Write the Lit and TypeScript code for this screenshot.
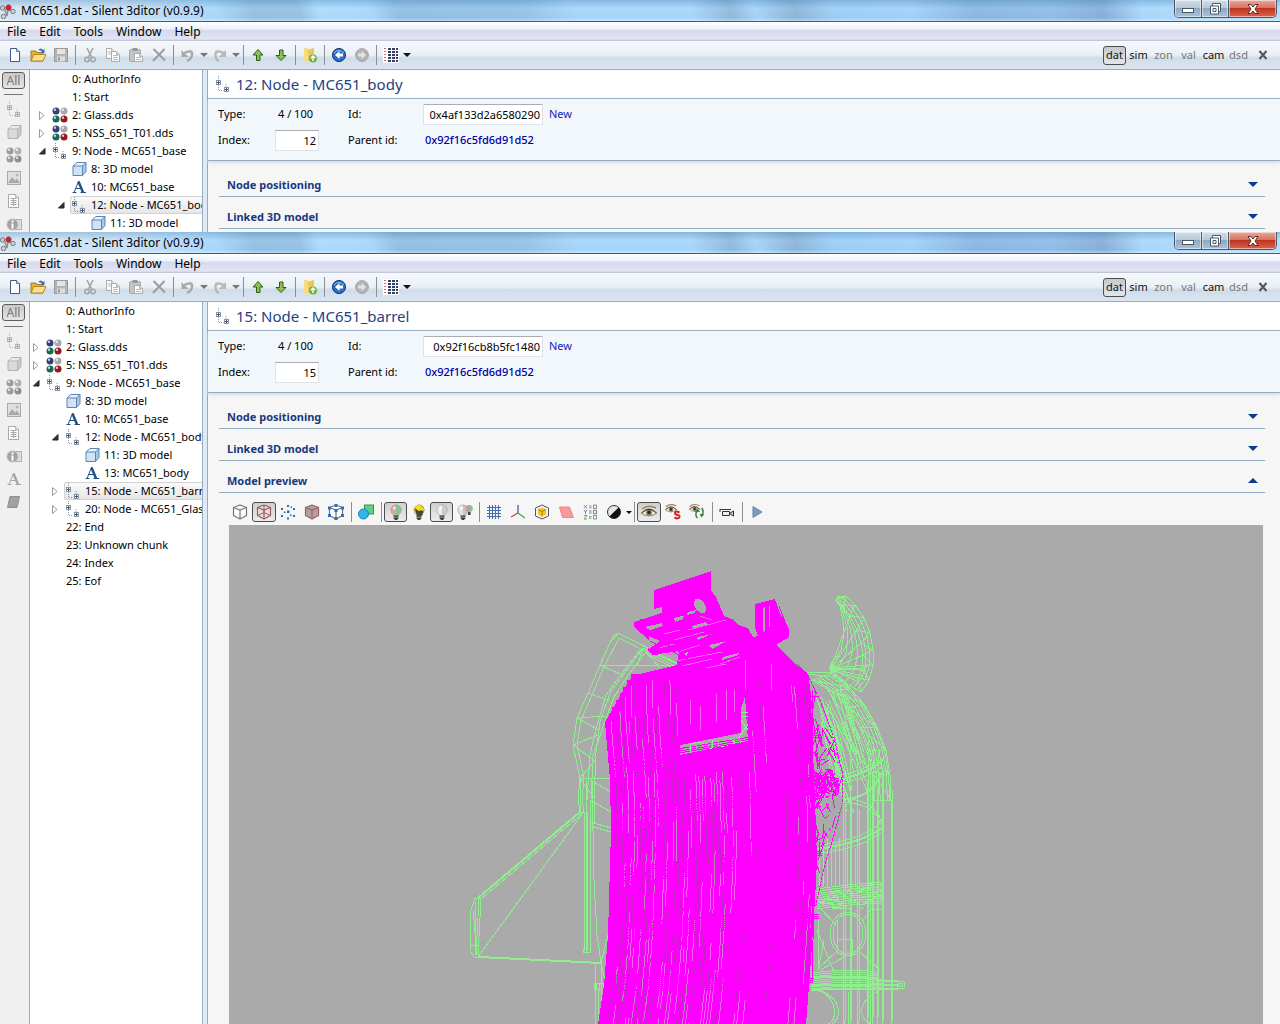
import { LitElement, html, css, svg, nothing } from "lit";
import { customElement, property } from "lit/decorators.js";
import { classMap } from "lit/directives/class-map.js";

/* ---------- icons, drawn on a 16 x 16 grid ---------- */

const cube = (line: string, top: string, front: string, side: string) => svg`
  <path d="M2 5 6 1.5h9L11.5 5z" fill=${top}/><path d="M11.500 5 15 1.500v9L11.500 14.500z" fill=${side}/>
  <rect x="2" y="5" width="9.500" height="9.500" fill=${front}/>
  <path d="M2 5v9.500h9.500L15 10.500v-9H6zM2 5h9.500v9.500M11.500 5 15 1.500" fill="none" stroke=${line} stroke-width="1" stroke-linejoin="round"/>`;

const hexCube = (line: string, fill: string) => svg`
  <path d="M8 1 14.500 3.500v8L8 15 1.500 11.500v-8z" fill=${fill} stroke=${line} stroke-width="1.200" stroke-linejoin="round"/>
  <path d="M1.500 3.500 8 6l6.500-2.500M8 6v9" fill="none" stroke=${line} stroke-width="1.200"/>`;

const node = (c: string, box: string, mark: string) => svg`
  <path d="M3.500 0v4M3.500 9v5.500h5M11 8v3" stroke=${c} stroke-dasharray="1 1" fill="none"/>
  <rect x="1.500" y="4.500" width="4" height="4" fill=${box} stroke=${c}/><path d="M3.500 5v3M2 6.500h3" stroke=${mark} stroke-width=".8"/>
  <rect x="9.500" y="11.500" width="4" height="4" fill=${box} stroke=${c}/><path d="M11.500 12v3M10 13.500h3" stroke=${mark} stroke-width=".8"/>`;

const ball = (x: number, y: number, c: string, r = 3.5) => svg`
  <circle cx=${x} cy=${y} r=${r} fill=${c}/><circle cx=${x - 1} cy=${y - 1.3} r="1.200" fill="#fff" opacity=".75"/>`;

const bulb = (l: string, r: string) => svg`
  <path d="M8 .800A5.200 5.200 0 0 0 4 9.300q1.400 1.200 1.600 2.700H8z" fill=${l}/>
  <path d="M8 .800A5.200 5.200 0 0 1 12 9.300q-1.400 1.200-1.600 2.700H8z" fill=${r}/>
  <path d="M8 .800A5.200 5.200 0 0 0 4 9.300q1.400 1.200 1.600 2.700h4.800Q10.600 10.500 12 9.300A5.200 5.200 0 0 0 8 .800z" fill="none" stroke="#999" stroke-width=".6"/>
  <path d="M5.700 11.500h4.600v2.700L9 16H7l-1.300-1.800z" fill="#3c3c3c"/><path d="M6 13.200h4" stroke="#c4c4c4" stroke-width=".7"/>
  <circle cx="6.500" cy="4" r="1.500" fill="#fff" opacity=".7"/>`;

const eye = svg`
  <path d="M1 5Q7 0 15 4" stroke="#a4835f" stroke-width="1.600" fill="none"/>
  <path d="M0 9Q8 1 16 9 8 15 0 9z" fill="#e8cdb4" stroke="#8d6f52" stroke-width=".8"/>
  <path d="M2 9q6-6 12 0-6 4-12 0z" fill="#f3f3ea"/><circle cx="8" cy="8.500" r="3" fill="#6d7f5c"/>
  <circle cx="8" cy="8.500" r="1.400" fill="#1c2418"/><path d="M1.500 8.500Q8 2 14.500 8.500" stroke="#3d2c1c" fill="none"/>`;

const page = (x: number, y: number, w: number, h: number, line: string) => svg`
  <path d="M${x} ${y}h${w - 3}l3 3v${h - 3}h-${w}z" fill="#fdfdfd" stroke=${line}/>
  <path d="M${x + w - 3} ${y}v3h3" fill="#dde" stroke=${line} stroke-width=".8"/>`;

const glyphA = (c: string) => svg`
  <path d="M3 13.500 7.500 2.500 12.500 13.500" fill="none" stroke=${c} stroke-width="1"/>
  <path d="M7.500 2.500 12 13.500" stroke=${c} stroke-width="2.400"/><path d="M5 9.500h5M1.500 13.500h4M9.500 13.500h5.500" stroke=${c} stroke-width="1.200"/>`;

const icons: Record<string, unknown> = {
  logo: svg`<path d="M4 4 7 13M7 13l1-6M8 7l5 1" stroke="#8a8f94" stroke-width="1.500"/>
    <circle cx="2.500" cy="5" r="2.200" fill="#cfd3d6" stroke="#777"/><circle cx="3.500" cy="13.500" r="2.200" fill="#cfd3d6" stroke="#777"/>
    <circle cx="13" cy="8.500" r="2.200" fill="#cfd3d6" stroke="#777"/><circle cx="8.500" cy="4.500" r="2.600" fill="#d81e2c" stroke="#a33"/>`,
  new: page(3.5, 1.5, 9, 13, "#3c5a80"),
  open: svg`<path d="M1 4h5l1 1.500h6V14H1z" fill="#e2b23c" stroke="#a67a18"/><path d="M4 7.500h12L13 14H1z" fill="#fbe08a" stroke="#b8892a"/><path d="M8 3q3-3 5 0l1.500-1v4h-4L12 4.500Q10.500 3 8 3z" fill="#3e6fa8"/>`,
  save: svg`<path d="M1.500 1.500h13v13h-13z" fill="#b4b4b4" stroke="#999"/><rect x="4" y="2" width="8" height="5" fill="#e6e6e6"/><rect x="4" y="9.500" width="8" height="5" fill="#ddd"/><rect x="5" y="10.500" width="2" height="3" fill="#999"/>`,
  cut: svg`<path d="M5 1 9.500 10M11 1 6.500 10" stroke="#a4a4a4" stroke-width="1.600"/><circle cx="5" cy="12.500" r="2.200" fill="none" stroke="#a4a4a4" stroke-width="1.500"/><circle cx="11" cy="12.500" r="2.200" fill="none" stroke="#a4a4a4" stroke-width="1.500"/>`,
  copy: svg`${page(1.5, 1.5, 8, 10, "#aaa")}<path d="M3 5h4M3 7h4" stroke="#bbb"/>${page(6.5, 4.500, 8, 10, "#aaa")}<path d="M8 8.500h5M8 10.500h5M8 12.500h5" stroke="#bbb"/>`,
  paste: svg`<rect x="1.500" y="2.500" width="11" height="12" rx="1" fill="#c4c4c4" stroke="#a6a6a6"/><rect x="4.500" y="1" width="5" height="3" fill="#999"/>${page(6.5, 6.5, 8, 8, "#aaa")}<path d="M8 10.500h5M8 12.500h5" stroke="#bbb"/>`,
  del: svg`<path d="M2.500 2 14 13.500M13.500 2 2 14" stroke="#9c9c9c" stroke-width="2"/>`,
  undo: svg`<path d="M4 6q9-4 8 2Q11.500 12 7 14" fill="none" stroke="#a8a8a8" stroke-width="2.400"/><path d="M1.500 3v7h7z" fill="#a8a8a8"/>`,
  redo: svg`<path d="M12 6Q3 2 3.500 8 4 13 7 14" fill="none" stroke="#b8b8b8" stroke-width="2.400"/><path d="M14 3v7H7z" fill="#b8b8b8"/>`,
  up: svg`<path d="M8 2.500 13 8h-3v5.500H6.500V8H3z" fill="#8cc152" stroke="#2f5c16" stroke-linejoin="round"/>`,
  down: svg`<path d="M8 13.500 13 8.500h-3V3H6.500v5.500H3z" fill="#8cc152" stroke="#2f5c16" stroke-linejoin="round"/>`,
  folder: svg`<path d="M2 1h4v14H2z" fill="#f7dc87"/><path d="M6 2.500 12 1v11l-6 2z" fill="#eec65a"/><circle cx="11" cy="11.500" r="4" fill="#6db33f"/><path d="M11 9v5M8.800 11.300 11 9l2.200 2.300" stroke="#fff" stroke-width="1.400" fill="none"/>`,
  back: svg`<circle cx="8" cy="8" r="6.600" fill="#2a6cc4" stroke="#1c3f7c"/><path d="M3 6q5-5 10 0" stroke="#8fc0f2" fill="none"/><path d="M8.500 4 4 8l4.500 4V9.500H12v-3H8.500z" fill="#fff"/>`,
  fwd: svg`<circle cx="8" cy="8" r="6.300" fill="#b5b5b5" stroke="#9c9c9c"/><path d="M7.500 4 12 8l-4.500 4V9.500H4v-3h3.500z" fill="#e4e4e4"/>`,
  list: svg`<rect x="0" y="0" width="16" height="16" fill="#fff"/><g shape-rendering="crispEdges"><path d="M1 1.500h2M1 7.500h2M1 13.500h2" stroke="#d66"/><path d="M1 4.500h2M1 10.500h2" stroke="#5a5"/>
    <path d="M5 1.500h3M5 4.500h3M5 7.500h3M5 10.500h3M5 13.500h3M9 1.500h3M9 4.500h3M9 7.500h3M9 10.500h3M9 13.500h3M13 1.500h2M13 4.500h2M13 7.500h2M13 10.500h2M13 13.500h2" stroke="#333f66" stroke-width="2"/></g>`,
  node: node("#8796a8", "#fff", "#234"),
  gnode: node("#b4b4b4", "#eee", "#999"),
  model: cube("#5e83b5", "#eaf3fd", "#cfe2f6", "#a9c7e8"),
  gmodel: cube("#b4b4b4", "#ececec", "#dadada", "#c8c8c8"),
  tex: svg`${ball(4, 4, "#333f78")}${ball(12, 4, "#a8a8a8")}${ball(4, 12, "#146a54")}${ball(12, 12, "#961820")}`,
  gtex: svg`${ball(4, 4, "#9a9a9a")}${ball(12, 4, "#b0b0b0")}${ball(4, 12, "#9a9a9a")}${ball(12, 12, "#8e8e8e")}`,
  text: glyphA("#1f4f82"),
  gtext: glyphA("#a6a6a6"),
  image: svg`<rect x="1.500" y="1.500" width="13" height="13" fill="#e0e0e0" stroke="#aaa"/><path d="M2 13 6 7l3 3.500 2-2L14 13z" fill="#a8a8a8"/><circle cx="11" cy="5" r="1.500" fill="#b6b6b6"/>`,
  doc: svg`${page(2.500, 1.500, 10, 13, "#a8a8a8")}<path d="M4.500 5.500h6M4.500 7.500h6M4.500 9.500h6M4.500 11.500h6M7.500 5v8" stroke="#aaa"/>`,
  info: svg`<rect x="8" y="3.500" width="7.500" height="10" fill="#ddd" stroke="#b2b2b2"/><circle cx="6.500" cy="8.500" r="5.500" fill="#a2a2a2" stroke="#c2c2c2"/><path d="M6.500 4.500v2M6.500 7.500v5" stroke="#fff" stroke-width="2"/>`,
  skew: svg`<path d="M4 2.500h9.500l-2.500 11H1.500z" fill="#a2a2a2" stroke="#8e8e8e"/>`,
  wire: hexCube("#777", "#fdfdfd"),
  solid: svg`${hexCube("#985c63", "#eadcdc")}<path d="M1.500 11.500 8 8.500l6.500 3M8 1v7.500" stroke="#985c63" fill="none"/>`,
  dots: svg`<g fill="#2f6fb5"><rect x="7" y="6.500" width="2.500" height="2.500"/><rect x="1" y="4" width="2" height="2"/><rect x="13" y="4" width="2" height="2"/><rect x="1" y="11" width="2" height="2"/><rect x="13" y="11" width="2" height="2"/><rect x="7" y="1" width="2" height="2"/><rect x="7" y="13.500" width="2" height="2"/><rect x="4" y="7.500" width="1.500" height="1.500"/><rect x="10.500" y="2.500" width="1.500" height="1.500"/><rect x="10" y="10.500" width="1.500" height="1.500"/></g>`,
  filled: hexCube("#98626a", "#b99ea1"),
  verts: svg`${hexCube("#6c7884", "#fdfdfd")}<g fill="#2f6fb5"><rect x="0" y="2.500" width="3" height="3"/><rect x="6.500" y="0" width="3" height="3"/><rect x="13" y="2.500" width="3" height="3"/><rect x="0" y="10" width="3" height="3"/><rect x="6.500" y="5" width="3" height="3"/><rect x="13" y="10" width="3" height="3"/><rect x="6.500" y="13" width="3" height="3"/></g>`,
  shapes: svg`<rect x="6.500" y="1" width="9" height="9" fill="#5fd084" stroke="#2c9c58"/><circle cx="5.500" cy="10" r="5" fill="#33b4e6" stroke="#1b82b8"/>`,
  bulb1: bulb("#dda79c", "#86c596"),
  bulb2: svg`${bulb("#f0d020", "#4a483a")}<path d="M3 3.500Q6 0 10 1.500L13 5 8 7z" fill="#f5dc22"/><path d="m3.500 4 8.500 6-1.500 2H6z" fill="#4a483a"/><path d="M3.500 3 13 7.500q0-3-2-5Q7-.500 3.500 3z" fill="#f5dc22"/>`,
  bulb3: bulb("#ececec", "#cdcdcd"),
  bulb4: svg`<g transform="translate(-2 0)">${bulb("#e2e2e2", "#c4c4c4")}</g><circle cx="12.300" cy="4.500" r="3.500" fill="#86c596"/><path d="M12.300 1a3.500 3.500 0 0 0 0 7z" fill="#c99"/><rect x="11" y="8" width="2.600" height="3" fill="#444"/>`,
  grid: svg`<path d="M3.500 1v14M6.500 1v14M9.500 1v14M12.500 1v14M1 3.500h14M1 6.500h14M1 9.500h14M1 12.500h14" stroke="#3f6ea8"/>`,
  axes: svg`<path d="M8 1v8" stroke="#335a96" stroke-width="1.200"/><path d="M8 9 1 13" stroke="#b44" stroke-width="1.200"/><path d="m8 9 7 5" stroke="#4a4" stroke-width="1.200"/>`,
  box: svg`<path d="M8 1 14.500 4v8L8 15 1.500 12V4z" fill="#f3f3f3" stroke="#555"/><path d="M8 3.500 12 5.500v5L8 12.500 4 10.500v-5z" fill="#f4c51d"/><path d="M4 5.500 8 7.500l4-2M8 7.500v5" stroke="#a8800a" fill="none"/>`,
  plane: svg`<path d="M1.500 3h10l4 10.500H4.500z" fill="#f79a9a" stroke="#f08484"/>`,
  xyz: svg`<g fill="none" stroke-width=".8"><path d="M2 1l3 3.500M5 1 2 4.500M7 2h2.500M7 3.800h2.500M11.500 1h3v3.500h-3z" stroke="#777"/><path d="M2 6l1.500 2L5 6M3.500 8v2M7 7h2.500M7 9h2.500M11.500 6.300h3v3.500h-3z" stroke="#44679c"/><path d="M2 11.500h3L2 15h3M7 12.500h2.500M7 14.300h2.500M11.500 11.500h3V15h-3z" stroke="#598a4c"/></g>`,
  contrast: svg`<circle cx="8" cy="8" r="6.500" fill="#e8e8e8" stroke="#333"/><path d="M12.600 3.400a6.500 6.500 0 0 1-9.200 9.200z" fill="#111"/>`,
  eye,
  eyeS: svg`<g transform="translate(0 -1) scale(.75)">${eye}</g><path d="M14.500 8.500q-4.500-2-4.500.5 0 1.500 2.500 2t2 2q-1 2.500-5 .5" fill="none" stroke="#d3222b" stroke-width="2"/>`,
  eyeR: svg`<g transform="translate(0 -1) scale(.7)">${eye}</g><path d="M12.500 4q3 3 .5 7M8.500 14q-3-3-.5-7" fill="none" stroke="#3e8246" stroke-width="1.500"/><path d="M10.500 10h5l-3 3.500zM5.500 8 8.500 4.500 11 8z" fill="#3e8246"/>`,
  camera: svg`<path d="M3.500 7.500h7v4h-7z" fill="#eee" stroke="#333"/><path d="m10.500 9.500 4-2.500v5z" fill="#ccc" stroke="#333"/><path d="M1 5.500h11M1 5v3" stroke="#333"/>`,
  play: svg`<path d="M4 2.500 13 8l-9 5.500z" fill="#7c9bbd" stroke="#6384a8"/>`,
};

const icon = (name: string) => html`<svg class="icon" viewBox="0 0 16 16" width="16" height="16" aria-hidden="true">${icons[name]}</svg>`;

const iconButton = (name: string, on = false) =>
  html`<button class=${classMap({ tool: true, on })} aria-label=${name} aria-pressed=${on}>${icon(name)}</button>`;
const sep = html`<span class="sep"></span>`;
const drop = (off = false) => html`<button class="drop" aria-label="options"><i class=${classMap({ caret: true, off })}></i></button>`;

const shared = css`
  * { box-sizing: border-box; }
  button, input { font: inherit; color: inherit; margin: 0; }
  button { padding: 0; border: 0; background: none; }
  .icon { display: block; flex: none; }
  .tool { display: grid; place-items: center; width: 23px; height: 20px; flex: none; }
  .tool.on { border: 1px solid #4e4e4e; border-radius: 3px; background: linear-gradient(#cfcfcf, #ececec); }
  .sep { width: 1px; height: 20px; margin: 0 2px 0 3px; background: #8a8f96; flex: none; }
  .drop { display: grid; place-items: center; width: 9px; height: 20px; flex: none; }
  .caret { width: 0; height: 0; border: 4px solid transparent; border-top-color: #111; border-bottom: 0; }
  .caret.off { border-top-color: #777; }
`;

/* ---------- wireframe scene ---------- */

type P = [number, number];

const rng = (seed: number) => () => {
  seed = (seed * 1664525 + 1013904223) % 4294967296;
  return seed / 4294967296;
};
const curve = (pts: P[]) => (y: number) => {
  for (let i = 1; i < pts.length; i++)
    if (y <= pts[i][0]) {
      const [a, b] = [pts[i - 1], pts[i]];
      return a[1] + ((b[1] - a[1]) * (y - a[0])) / (b[0] - a[0]);
    }
  return pts[pts.length - 1][1];
};
const left = curve([[660, 605], [722, 605], [780, 610], [830, 611], [900, 609], [935, 608], [985, 604], [1024, 598]]);
const right = curve([[660, 807], [720, 812], [800, 816], [860, 817], [900, 815], [960, 811], [1024, 806]]);
const roof = curve([[605, 722], [632, 677], [677, 666], [807, 672]]);
const f = (n: number) => n.toFixed(1);

/* Slits between the parallel wires of the barrel, one column every three units, sorted by tone. */
function slits() {
  const r = rng(5);
  const tones = ["", "", ""];
  for (let x = 611; x < 812; x += 3) {
    const t = (x - 605) / 207;
    const core = x > 747 && x < 792;
    const heart = x > 677 && x <= 747;
    const density = core ? 0.05 : x > 792 ? 0.55 : x > 722 ? 0.35 : x < 617 || (x > 655 && x < 664) ? 0.35 : 0.72;
    let y = roof(x) + 6 + r() * 12;
    if (heart) y = 772 + r() * 8;
    while (y < 1024) {
      const len = 12 + r() * 60;
      if (r() < density) {
        const tone = r() < 0.5 ? 0 : r() < 0.75 ? 1 : 2;
        const end = Math.min(1024, y + len);
        let d = "";
        for (let v = y; ; v = Math.min(end, v + 25)) {
          d += `${v === y ? "M" : "L"}${f(left(v) + t * (right(v) - left(v)))} ${f(v)}`;
          if (v >= end) break;
        }
        tones[tone] += d;
      }
      y += len + 2 + r() * 8;
    }
  }
  return tones;
}

/* Hoops that cross the barrel. */
function hoops() {
  const r = rng(7);
  let d = "";
  for (const [a, b] of [[768, 735], [822, 785], [877, 853], [932, 916], [983, 980]])
    for (let k = -4; k < 5; k++) {
      const y = a + k * 2 + r();
      const reach = Math.abs(k) < 2 ? 5 : -3;
      d += `M${f(left(y) + 2)} ${f(y)}L${f(right(b) + reach)} ${f(b + k * 2)}`;
    }
  return d;
}

function scribble(seed: number, pts: P[], n: number, dx: number, dy: number) {
  const r = rng(seed);
  const inside = (x: number, y: number) => {
    let hit = false;
    for (let i = 0, j = pts.length - 1; i < pts.length; j = i++) {
      const [xi, yi] = pts[i], [xj, yj] = pts[j];
      if (yi > y !== yj > y && x < ((xj - xi) * (y - yi)) / (yj - yi) + xi) hit = !hit;
    }
    return hit;
  };
  const xs = pts.map((p) => p[0]), ys = pts.map((p) => p[1]);
  const x0 = Math.min(...xs), x1 = Math.max(...xs), y0 = Math.min(...ys), y1 = Math.max(...ys);
  let d = "";
  for (let i = 0, made = 0; i < n * 30 && made < n; i++) {
    const x = x0 + r() * (x1 - x0), y = y0 + r() * (y1 - y0);
    const u = x + (r() - 0.5) * dx, v = y + (r() - 0.5) * dy;
    if (inside(x, y) && inside(u, v)) { d += `M${f(x)} ${f(y)}L${f(u)} ${f(v)}`; made++; }
  }
  return d;
}

const line = (pts: P[]) => "M" + pts.map(([x, y]) => `${f(x)} ${f(y)}`).join("L");
const blend = (a: P[], b: P[], t: number): P[] => a.map(([x, y], i) => [x + (b[i][0] - x) * t, y + (b[i][1] - y) * t]);
const truss = (a: P[], b: P[]) =>
  a.map((p, i) => `M${p[0]} ${p[1]}L${b[i][0]} ${b[i][1]}` + (a[i + 1] ? `L${a[i + 1][0]} ${a[i + 1][1]}` : "")).join("");

const lattice: P[] = [[807, 674], [820, 700], [834, 738], [843, 775], [842, 805], [834, 835], [824, 868], [816, 905], [812, 905]];
const hornOuter: P[] = [[838, 596], [846, 596], [855, 605], [864, 618], [870, 633], [873, 650], [873, 665], [869, 680], [861, 692]];
const hornInner: P[] = [[836, 600], [843, 606], [850, 616], [857, 630], [861, 643], [863, 655], [862, 668], [858, 678], [850, 686]];
const hornBack: P[] = [[836, 600], [840, 606], [842, 616], [844, 628], [843, 640], [841, 650], [836, 658], [830, 665], [830, 672]];

function hornLines() {
  let d = line(hornOuter) + line(hornInner) + line(hornBack) + truss(hornOuter, hornInner);
  for (const t of [0.35, 0.7]) d += line(blend(hornOuter, hornInner, t));
  for (const t of [0.25, 0.5, 0.75]) d += line(blend(hornInner, hornBack, t));
  for (const x of [852, 858, 862, 866, 870]) d += `M829 668L${x} ${690 - (x - 852) * 1.4}`;
  for (const [x, y] of hornInner.slice(2)) d += `M830 670L${x} ${y}`;
  return d;
}

const shoulder: P[] = [[832, 673], [850, 688], [864, 704], [877, 727], [886, 750], [890, 775], [891, 800]];
const shoulderIn: P[] = [[812, 680], [832, 692], [848, 708], [860, 728], [868, 750], [872, 772], [873, 800]];

function shell() {
  let d = truss(shoulder, shoulderIn) + "M807 672L832 673M807 674L830 677";
  for (const t of [0, 0.08, 0.2, 0.4, 0.6, 0.75, 0.9, 1]) d += line(blend(shoulder, shoulderIn, t));
  const r = rng(61);
  for (let i = 0; i < 34; i++) {
    const x = 815 + r() * 32, y = 688 + r() * 40;
    d += `M${f(x)} ${f(y)}L${f(x + 8 + r() * 26)} ${f(y + 30 + r() * 60)}`;
  }
  return d;
}

function rails() {
  let d = "";
  const starts: P[] = [[843, 780], [846, 800], [850, 735], [852, 800], [857, 760], [860, 810], [867, 780], [869, 735], [870, 770], [871, 790], [872, 800], [874, 742], [877, 800], [879, 752], [882, 768], [884, 770], [891, 800], [893, 790]];
  starts.forEach(([x, y], i) => { d += `M${x} ${y}L${x - (i % 2)} 1024`; });
  for (let i = 0; i < 10; i++) d += `M${820 + i * 4} ${848 - (i % 3) * 5}L${819 + i * 4} 888`;
  for (let k = 0; k < 10; k++) {
    d += `M817 ${889 + k * 2.2}Q850 ${884 + k * 2.2} 880 ${882 + k * 2.4}L884 ${888 + k * 2}`;
    d += `M811 ${973 + k * 2}Q850 ${968 + k * 2} ${876 + k} ${972 + k * 2}`;
  }
  return d;
}

@customElement("model-view")
class ModelView extends LitElement {
  static styles = css`
    :host { display: block; background: #aaa; overflow: hidden; }
    .scene { display: block; width: 100%; height: 100%; shape-rendering: crispEdges; }
    .green { fill: none; stroke: #90ee90; stroke-width: 1; }
    .thick { stroke-width: 2; }
    .fillm { fill: #f0f; }
    .wirem { fill: none; stroke: #f0f; stroke-width: 1; }
    .void { fill: #aaa; }
    .gap { fill: none; stroke-width: 1; }
    .dim { stroke: #c324c3; }
    .pale { stroke: #f066f0; }
    .open { stroke: #bd86bd; }
  `;
  render() {
    const [dim, pale, open] = slits();
    return html`<svg class="scene" viewBox="229 525 1034 499" preserveAspectRatio="xMidYMin slice" role="img" aria-label="Model preview">
      <g class="green">
        <path d="M677 663 618 633 613 636 600 665 588 693 577 718 573 745 580 778 578 800 580 812M677 667 619 638 604 667 592 695 581 720 577 745 584 778 582 800 584 812M618 633 613 640M677 664 643 648 623 675 610 693 600 722 596 753 594 800V824M677 670 645 653 627 677 614 697 603 727 593 756 591 800"/>
        <path d="M640 650 619 677 606 695 597 725 590 755 587 800M600 665H677M600 665l22 10M588 693l22 8M577 718 606 716M577 718l22 12M573 745l22 16M573 745l25-10M580 778H610M580 778l14-16M580 778l14 20M643 648l-6 18M645 651 660 668"/>
        <path d="M580 812H585L584 952H591L590 800M586 780V952M588 812 587 952M592 780 594 880 597 935 601 963M590 800 611 812M590 822 611 828M590 826 611 832M580 779V812M592 781 611 792"/>
        <path class="thick" d="M580 812 478 898M479 957 601 963"/>
        <path d="M584 812 481 899M583 813 478 957M475 898 471 910 470 950 474 957H480M475 898H481L478 957M475 902V955M479 899 476 955M471 945H478M473 910 477 955M601 963 608 935M601 963 606 985M595 965V1024M601 963V1024M598 990V1024"/>
        <rect x="594" y="983" width="9" height="6"/><path d="M596 983v6M599 983v6"/>
        <path d=${hornLines()}/>
        <path d=${shell()}/>
        <path class="thick" d="M843 779Q870 772 883 760M845 799Q872 798 882 772M817 849Q862 843 882 828"/>
        <path d="M843 775Q870 768 885 757M843 783Q872 777 884 765M847 798Q880 803 882 826M846 802Q878 806 880 824M820 845Q862 840 882 822M820 853Q866 847 881 832"/>
        <path d=${rails()}/>
        <path d=${scribble(31, [[817, 885], [884, 880], [885, 910], [817, 910]], 40, 30, 12)}/>
        <ellipse cx="848" cy="934" rx="18" ry="22"/><ellipse cx="848" cy="934" rx="15" ry="20"/><path d="M837 920V955M837 939H852V955M820 908 836 925M817 970 838 950M820 970 846 956M874 905 862 922M880 970 860 952M818 912V970M824 940 818 970M817 930 834 972"/>
        <path d="M817 990Q832 995 834 1008T828 1024M880 990Q864 998 862 1008T870 1024M820 990Q836 997 838 1008T832 1024M848 992V1024"/>
        <path class="thick" d="M812 978Q850 974 885 981H899M812 985H900M812 989H898"/><circle cx="901" cy="985" r="4"/><circle cx="901" cy="985" r="2"/>
      </g>

      <path class="fillm" d="M605 722 632 676 677 665 679 651 652 655 648 651 650 641 634 627V622L662 613 662 607 654 609V590L711 571V590L716 597 724 616 734 620 738 625 748 628 753 637 758 636 755 628V604L775 599 779 611 789 629V637L776 645 793 662 802 671 807 672 811 700 815 800 817 860 815 900 811 960 806 1024H598L604 985 608 935 609 900 611 830 610 780Z"/>
      <g class="void">
        <ellipse cx="700" cy="606" rx="5" ry="8" transform="rotate(-35 700 606)"/>
        <path d="M645 627l17-4 1 3-13 4zM649 636l11 5-11 8zM674 618l10-3-1 4-8 3zM688 612l8-2-1 3-8 2zM692 626l14-4 2 3-14 4zM697 637l15-3-14 6zM709 645l18-4-15 8zM723 657l16-4-3 3-14 4zM684 653l4-1-1 5zM763 608l2-1v24l-2 1zM769 606h1v20l-1 1z"/>
        <path d="M680 745 741 733V708L745 697 748 741 680 755z"/>
      </g>
      <path class="green" d="M690 753V744L700 742 712 749M712 748V740M730 738 735 743 748 724M741 720 748 730M741 712H748M741 716H748M735 743 748 741M720 747 735 743"/>

      <g class="gap">
        <path class="dim" d=${dim}/>
        <path class="pale" d=${pale}/>
        <path class="open" d=${open}/>
        <path class="pale" d="M676 661 722 652M682 666 712 659M720 664 740 657M688 630 726 620M668 655 700 645M745 690V660M690 724V700M700 730V706M716 722V694M726 720V690M734 712V690M771 690V664M660 648l14-4M664 634l16-4M700 616l12 4M706 668l20-4M674 640l30-8"/>
      </g>
      <path class="wirem" stroke-dasharray="14 2 5 1" d=${hoops()}/>
      <path class="wirem" d=${scribble(77, [[632, 795], [670, 790], [672, 822], [640, 832]], 60, 10, 8)}/>
      <g class="wirem">
        <path d=${line(lattice)} stroke-dasharray="3 1"/>
        <path d=${scribble(41, lattice, 70, 16, 36)}/>
        <path d=${scribble(43, [[805, 770], [832, 768], [840, 778], [838, 796], [805, 804]], 150, 16, 24)}/>
        <path d="M634 625 680 652M650 641 690 660M640 620 720 612M655 655 720 636M779 606 789 632M776 603 784 628M632 681 677 669M797 664 806 674M812 690 812 905M808 675 818 760M816 820 812 980"/>
        <path d="M605 722h5v-7h3v-7h4v-7h4v-7h3v-6h4v-7h4v-6h6" stroke-width="2"/>
      </g>
    </svg>`;
  }
}

/* ---------- editor window ---------- */

interface Row { label: string; level: number; icon?: string; state?: "open" | "closed"; selected?: boolean; }
interface Doc { node: string; index: string; id: string; parent: string; rows: Row[]; filters: string[]; scrolled: boolean; preview: boolean; }

@customElement("editor-window")
class EditorWindow extends LitElement {
  @property({ attribute: false }) doc!: Doc;

  static styles = [shared, css`
    :host { display: flex; flex-direction: column; font: 11px/18px "Noto Sans", "Open Sans", sans-serif; color: #000; background: #dfeaf5; min-width: 0; }
    .title { display: flex; align-items: center; height: 22px; padding-right: 3px; font-size: 12px; border-bottom: 1px solid #4c5b6c;
      background:
        linear-gradient(rgba(60,120,170,.3), rgba(255,255,255,.08) 40%, rgba(255,255,255,0) 85%, rgba(255,255,255,.4)),
        linear-gradient(75deg, #d3e5f4 0, #c6e0f6 10%, #a8d6fa 17%, #92bfe2 20%, #94c1e4 23.500%, #abd9fc 25%, #a8d6fa 29%, #90bee2 31%, #93c1e6 41%, #a5d5fb 45%, #a5d5fb 54%, #8db8dc 57%, #a4d2f8 59%, #8ab4d8 62%, #9bcdf5 65%, #a0d0f8 71%, #88b6e2 76%, #8ebce8 82%, #84add8 86%, #a8d6fa 89%, #b4dcfa 100%); }
    .title h1 { flex: 1; margin: 0 0 0 5px; font: inherit; }
    .title .icon { margin-top: 1px; }
    .caption { display: flex; align-self: flex-start; height: 18px; border: 1px solid #4a5766; border-top: 0; border-radius: 0 0 5px 5px; overflow: hidden; }
    .caption button { display: grid; place-items: center; width: 27px; background: linear-gradient(#d3dfea, #b5c7d8 48%, #8ea9c2 50%, #a9c3da); box-shadow: inset 0 0 0 1px rgba(255,255,255,.5); border-right: 1px solid #4a5766; }
    .caption .close { width: 47px; border-right: 0; background: linear-gradient(#e9a99c, #d5705c 48%, #bf3420 50%, #d9644c); }
    .menu { display: flex; height: 19px; padding-left: 7px; gap: 13px; font-size: 12px; line-height: 19px; background: linear-gradient(#fff, #edf0f8 38%, #d5daec 42%, #e2e4f4 90%, #b7bcd0); }
    .menu button { line-height: 19px; }
    .bar { display: flex; align-items: center; height: 29px; padding: 0 6px 0 3px; border-bottom: 1px solid #93acc4; background: linear-gradient(#f6f9fc, #e9f0f6 50%, #d0dde9 60%, #dae7f2); }
    .fill { flex: 1; }
    .mode { width: 25px; height: 20px; color: #111; }
    .mode.off { color: #777; }
    .mode.on { width: 23px; border: 1px solid #4e4e4e; border-radius: 3px; background: linear-gradient(#c6c9cc, #e3e6e9); line-height: 16px; height: 19px; }
    .body { display: flex; flex: 1; min-height: 0; }
    .side { display: flex; flex-direction: column; align-items: center; gap: 7px; flex: none; width: 30px; padding: 2px 2px 0 0; background: #f0f0f0; border-right: 1px solid #93acc4; }
    .all { width: 23px; height: 17px; border: 1px solid #5e5e5e; border-radius: 3px; background: linear-gradient(#c9c9c9, #e4e4e4); font-size: 12px; line-height: 14px; color: #777; margin-bottom: -2px; }
    .rule { width: 19px; height: 1px; background: #777; margin-bottom: -1px; }
    .side button:not(.all) { display: block; }
    .tree { flex: none; width: 173px; margin: 0; padding: 0 0 0 6px; list-style: none; background: #fff; overflow: hidden; border-right: 1px solid #93acc4; }
    .tree.scrolled { padding-left: 0; }
    .row { display: flex; height: 18px; align-items: center; white-space: nowrap; }
    .l1 { padding-left: 19px; }
    .l2 { padding-left: 38px; }
    .twist { flex: none; width: 15px; padding-left: 2px; display: block; height: 8px; }
    .twist svg { display: block; }
    .item { display: flex; flex: 1; align-items: center; gap: 4px; height: 18px; padding: 0; border: 1px solid transparent; border-radius: 3px 0 0 3px; line-height: 16px; }
    .item.selected { border-color: #d2d2d2; border-right: 0; background: linear-gradient(#fafafa, #e6e6e6); }
    .blank { width: 16px; flex: none; }
    .main { display: flex; flex-direction: column; flex: 1; min-width: 0; margin-left: 4px; border-left: 1px solid #93acc4; background: #f6f6f6; }
    .head { display: flex; align-items: center; gap: 5px; height: 29px; padding-left: 7px; margin: 0; background: #fff; border-bottom: 1px solid #93acc4; color: #1e3f82; font-size: 15px; font-weight: 400; }
    .info { display: grid; grid-template-columns: 57px 73px 75px 120px auto; grid-auto-rows: 26px; justify-content: start; align-items: center; padding: 2px 10px 7px; background: #f2f7fb; border-bottom: 1px solid #93acc4; box-shadow: 0 2px 3px #d5dce4; }
    .field { height: 21px; width: 100%; padding: 0 2px; text-align: right; border: 1px solid #dfe3e8; border-top-color: #abadb3; border-radius: 1px; background: #fff; }
    .field.short { width: 44px; }
    .value { padding-left: 3px; }
    a { color: #1a1ac0; text-decoration: none; }
    .new { padding-left: 6px; }
    .parent { padding-left: 2px; color: #0000a8; font-weight: 500; }
    .sections { padding: 4px 15px 0 11px; }
    .section { display: flex; align-items: center; justify-content: space-between; width: 100%; height: 32px; padding: 8px 7px 0 8px; border-bottom: 1px solid #8fa9be; font-weight: 700; color: #17397f; }
    .chev { width: 0; height: 0; border: 5px solid transparent; border-top-color: #0a3a8c; border-bottom: 0; }
    .chev.up { border-top: 0; border-bottom: 5px solid #0a3a8c; }
    .tools { display: flex; align-items: center; padding: 9px 0 3px 20px; }
    .tools .tool { width: 24px; }
    .tools .lamp .tool { width: 23px; }
    .lamp { display: flex; }
    .tools .drop { width: 5px; }
    .tools .caret { border-width: 3px; border-bottom: 0; }
    model-view { flex: 1; min-height: 0; margin: 0 17px 0 21px; }
  `];

  private row(r: Row) {
    const twist = r.state === "open"
      ? html`<svg width="8" height="8" aria-hidden="true"><path d="M7 1.500v5.500H1.500z" fill="#333" stroke="#222"/></svg>`
      : r.state === "closed"
        ? html`<svg width="8" height="10" aria-hidden="true"><path d="M1.500 .500v8l4.500-4z" fill="#fff" stroke="#999"/></svg>`
        : nothing;
    return html`<li class="row l${r.level}" role="treeitem" aria-selected=${!!r.selected}>
      <span class="twist">${twist}</span>
      <span class=${classMap({ item: true, selected: !!r.selected })}>${r.icon ? icon(r.icon) : html`<i class="blank"></i>`}<span>${r.label}</span></span>
    </li>`;
  }

  private section(label: string, open = false) {
    return html`<button class="section" aria-expanded=${open}><span>${label}</span><i class=${classMap({ chev: true, up: open })}></i></button>`;
  }

  render() {
    const d = this.doc;
    return html`
      <header class="title">
        ${icon("logo")}<h1>MC651.dat - Silent 3ditor (v0.9.9)</h1>
        <div class="caption">
          <button aria-label="Minimize"><svg width="14" height="12"><rect x="1.500" y="5.500" width="11" height="4" fill="#fff" stroke="#4a5766"/></svg></button>
          <button aria-label="Restore"><svg width="14" height="14"><path d="M4.500 1.500h8v8h-2v2.500h-8v-8h2z" fill="#fff" stroke="#4a5766"/><path d="M5 6.500h3v3H5zM4.500 4h6v5.500" fill="none" stroke="#4a5766"/></svg></button>
          <button class="close" aria-label="Close"><svg width="14" height="12"><path d="M2 1.500h3l2 2.500 2-2.500h3L9 6l3 4.500H9L7 8l-2 2.500H2L5 6z" fill="#fff" stroke="#5c2a2a"/></svg></button>
        </div>
      </header>
      <nav class="menu">${["File", "Edit", "Tools", "Window", "Help"].map((m) => html`<button>${m}</button>`)}</nav>
      <div class="bar">
        ${["new", "open", "save"].map((n) => iconButton(n))}${sep}
        ${["cut", "copy", "paste", "del"].map((n) => iconButton(n))}${sep}
        ${iconButton("undo")}${drop(true)}${iconButton("redo")}${drop(true)}${sep}
        ${iconButton("up")}${iconButton("down")}${sep}${iconButton("folder")}${sep}
        ${iconButton("back")}${iconButton("fwd")}${sep}${iconButton("list")}${drop()}
        <span class="fill"></span>
        <button class="mode on">dat</button><button class="mode">sim</button><button class="mode off">zon</button>
        <button class="mode off">val</button><button class="mode">cam</button><button class="mode off">dsd</button>
        <button class="tool" aria-label="Close file"><svg width="10" height="10" aria-hidden="true"><path d="M1.500 1 8.500 9M8.500 1 1.500 9" stroke="#555" stroke-width="2"/></svg></button>
      </div>
      <div class="body">
        <aside class="side">
          <button class="all">All</button><span class="rule"></span>
          ${d.filters.map((n) => html`<button aria-label=${n}>${icon(n)}</button>`)}
        </aside>
        <ul class=${classMap({ tree: true, scrolled: d.scrolled })} role="tree">${d.rows.map((r) => this.row(r))}</ul>
        <main class="main">
          <h2 class="head">${icon("node")}<span>${d.node}</span></h2>
          <div class="info">
            <span>Type:</span><span class="value">4 / 100</span>
            <label for="id">Id:</label><input id="id" class="field" .value=${d.id}><a class="new" href="#new">New</a>
            <label for="index">Index:</label><input id="index" class="field short" .value=${d.index}>
            <span>Parent id:</span><a class="parent" href="#parent">${d.parent}</a>
          </div>
          <div class="sections">
            ${this.section("Node positioning")}${this.section("Linked 3D model")}${d.preview ? this.section("Model preview", true) : nothing}
          </div>
          ${d.preview ? html`
            <div class="tools">
              ${iconButton("wire")}${iconButton("solid", true)}${iconButton("dots")}${iconButton("filled")}${iconButton("verts")}${sep}
              ${iconButton("shapes")}${sep}
              <span class="lamp">${iconButton("bulb1", true)}${iconButton("bulb2")}${iconButton("bulb3", true)}${iconButton("bulb4")}</span>${sep}
              ${["grid", "axes", "box", "plane", "xyz", "contrast"].map((n) => iconButton(n))}${drop()}${sep}
              ${iconButton("eye", true)}${iconButton("eyeS")}${iconButton("eyeR")}${sep}
              ${iconButton("camera")}${sep}${iconButton("play")}
            </div>
            <model-view></model-view>` : nothing}
        </main>
      </div>`;
  }
}

const head: Row[] = [
  { label: "0: AuthorInfo", level: 0 },
  { label: "1: Start", level: 0 },
  { label: "2: Glass.dds", level: 0, icon: "tex", state: "closed" },
  { label: "5: NSS_651_T01.dds", level: 0, icon: "tex", state: "closed" },
  { label: "9: Node - MC651_base", level: 0, icon: "node", state: "open" },
  { label: "8: 3D model", level: 1, icon: "model" },
  { label: "10: MC651_base", level: 1, icon: "text" },
];
const filters = ["gnode", "gmodel", "gtex", "image", "doc", "info"];

const docs: Doc[] = [
  {
    node: "12: Node - MC651_body", index: "12", id: "0x4af133d2a6580290", parent: "0x92f16c5fd6d91d52",
    filters, scrolled: false, preview: false,
    rows: [...head,
      { label: "12: Node - MC651_body", level: 1, icon: "node", state: "open", selected: true },
      { label: "11: 3D model", level: 2, icon: "model" }],
  },
  {
    node: "15: Node - MC651_barrel", index: "15", id: "0x92f16cb8b5fc1480", parent: "0x92f16c5fd6d91d52",
    filters: [...filters, "gtext", "skew"], scrolled: true, preview: true,
    rows: [...head,
      { label: "12: Node - MC651_body", level: 1, icon: "node", state: "open" },
      { label: "11: 3D model", level: 2, icon: "model" },
      { label: "13: MC651_body", level: 2, icon: "text" },
      { label: "15: Node - MC651_barrel", level: 1, icon: "node", state: "closed", selected: true },
      { label: "20: Node - MC651_Glass", level: 1, icon: "node", state: "closed" },
      { label: "22: End", level: 0 },
      { label: "23: Unknown chunk", level: 0 },
      { label: "24: Index", level: 0 },
      { label: "25: Eof", level: 0 }],
  },
];

@customElement("app-root")
class AppRoot extends LitElement {
  static styles = css`
    :host { display: flex; flex-direction: column; height: 100vh; }
    .top { flex: none; }
    .rest { flex: 1; min-height: 0; }
  `;
  render() {
    return html`<editor-window class="top" .doc=${docs[0]}></editor-window><editor-window class="rest" .doc=${docs[1]}></editor-window>`;
  }
}
